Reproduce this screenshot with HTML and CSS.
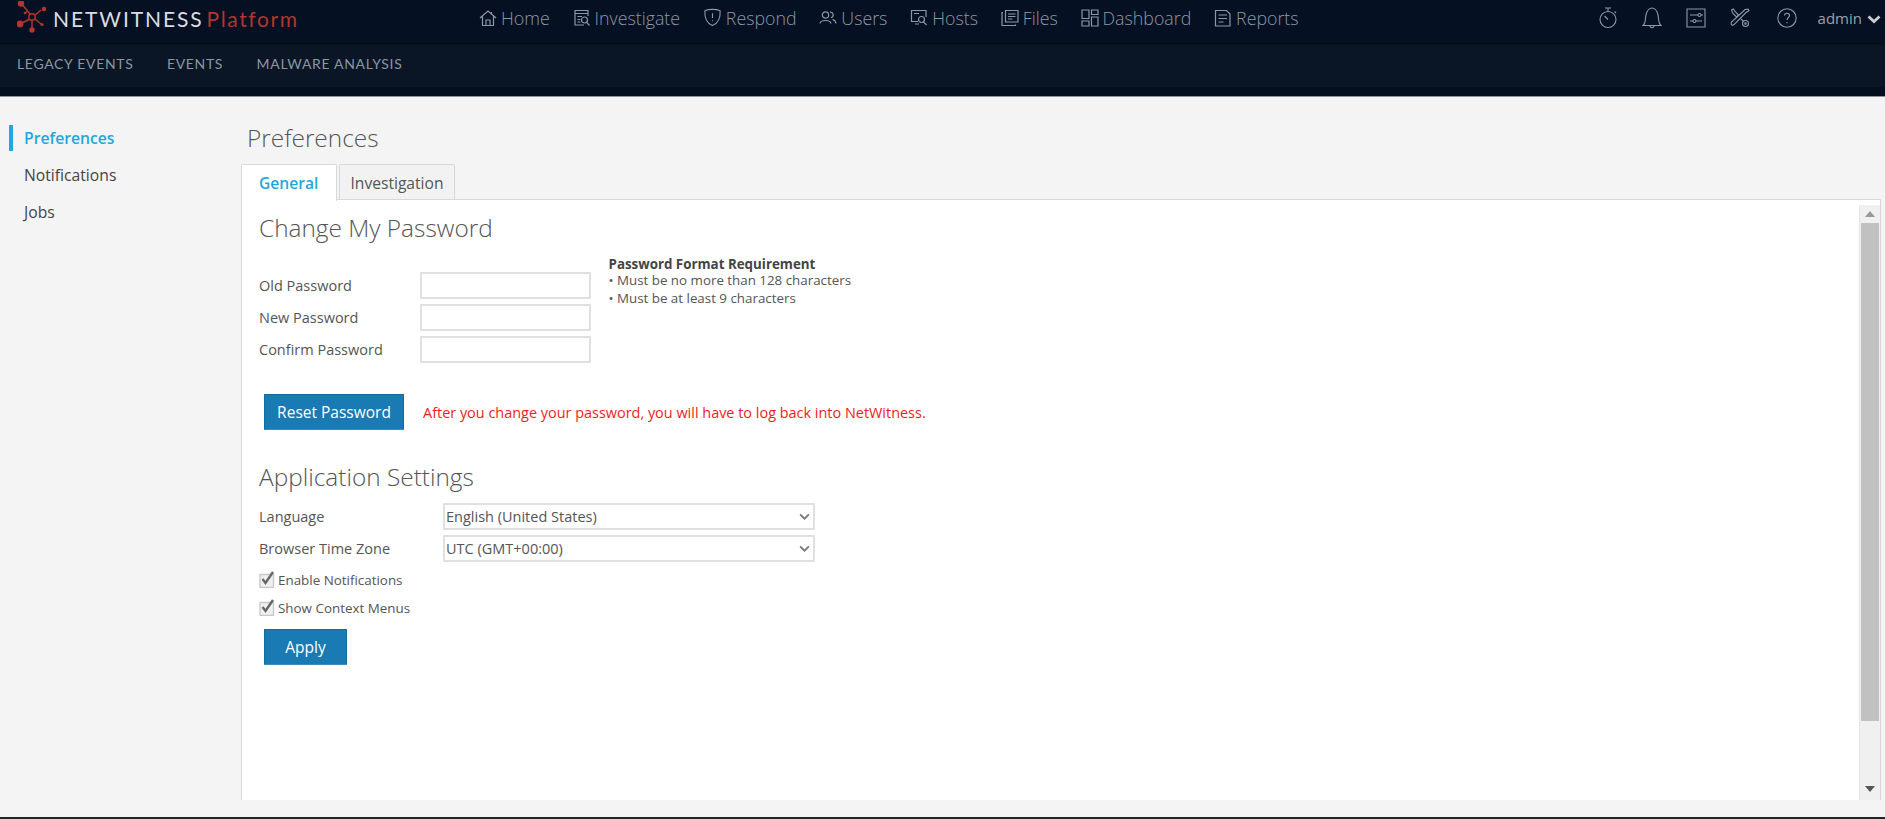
FILE: index.html
```html
<!DOCTYPE html>
<html lang="en">
<head>
<meta charset="utf-8">
<title>Preferences</title>
<link rel="stylesheet" href="styles.css">
</head>
<body>
<header class="topbar">
  <div class="logo">
    <svg class="logo-mark" viewBox="0 0 34 34" width="34" height="34">
      <g stroke="#b5342f" stroke-width="1.4" fill="none">
        <path d="M4 2 L13 13 M24 9 L18 14 M3 23 L12 18.500 M15 29 L15 19 M24 23 L18 18 M11 10 L8 12"/>
        <circle cx="15" cy="16" r="3.200"/>
      </g>
      <g fill="#b5342f">
        <circle cx="4" cy="2.500" r="3.200"/>
        <circle cx="27" cy="8" r="2.300"/>
        <circle cx="3" cy="23" r="3.400"/>
        <circle cx="15" cy="29" r="2.700"/>
        <circle cx="25" cy="23.500" r="1.600"/>
        <circle cx="8" cy="12" r="1.300"/>
      </g>
    </svg>
    <span class="logo-name">NETWITNESS</span><span class="logo-platform">Platform</span>
  </div>
  <nav class="mainnav">
    <a class="mainnav-item">
      <svg class="ico" viewBox="0 0 18 18"><path d="M1 9 L9 2 L17 9 M3.500 7.500 V16.500 H14.500 V7.500 M7 16.500 V11 H11 V16.500 M12.500 3 V5"/></svg>Home</a>
    <a class="mainnav-item">
      <svg class="ico" viewBox="0 0 18 18"><path d="M11 16 H2 V1.500 H15 V7 M2 4.500 H15 M4.500 7.500 H9 M4.500 10.500 H7.500 M4.500 13 H7.500"/><circle cx="11.500" cy="11" r="3"/><path d="M13.500 13.200 L16.500 16.500"/></svg>Investigate</a>
    <a class="mainnav-item">
      <svg class="ico ico-lg" viewBox="0 0 20 20"><path d="M10 1.500 C7 1.500 4 2 2 3 C1.500 10 3 15.500 10 18.500 C17 15.500 18.500 10 18 3 C16 2 13 1.500 10 1.500 Z M10 5.500 V10.500 M10 12.800 V14"/></svg>Respond</a>
    <a class="mainnav-item">
      <svg class="ico" viewBox="0 0 18 18"><circle cx="6.500" cy="6" r="3.200"/><path d="M1 14.500 C1.500 10.500 11.500 10.500 12 14.500 M11 3.200 C14.500 2.800 15.500 7.500 12 8.800 M13.500 10.500 C15.500 11 16.800 12.500 17 14.500"/></svg>Users</a>
    <a class="mainnav-item">
      <svg class="ico" viewBox="0 0 18 18"><path d="M8 12.500 H1.500 V1.500 H16 V8 M5 15 H9 M4 4.500 H9"/><circle cx="11.500" cy="10.500" r="3"/><path d="M13.500 12.800 L16.500 16"/></svg>Hosts</a>
    <a class="mainnav-item">
      <svg class="ico" viewBox="0 0 18 18"><path d="M4.500 1.500 H17 V13 H4.500 Z M2 3.500 H1 V16.500 H14.500 V15.500 M7 5 H14.500 M7 7.500 H14.500 M7 10 H11.500"/></svg>Files</a>
    <a class="mainnav-item">
      <svg class="ico" viewBox="0 0 18 18"><path d="M1 1 H8 V9.500 H1 Z M10.500 1 H17 V5.500 H10.500 Z M10.500 8 H17 V17 H10.500 Z M1 12 H8 V17 H1 Z"/></svg>Dashboard</a>
    <a class="mainnav-item">
      <svg class="ico" viewBox="0 0 18 18"><path d="M1.500 1.500 H12.500 L16 5 V17 H1.500 Z M4.500 6 H13 M4.500 9.500 H13 M4.500 13 H9.500"/></svg>Reports</a>
  </nav>
  <div class="tools">
    <svg class="tool tool-tall" viewBox="0 0 20 22"><circle cx="10" cy="12.500" r="8"/><path d="M7 1 H13 M10 1 V4.500 M16.500 4.500 L18 6 M6.500 9 L10 12.500"/></svg>
    <svg class="tool tool-tall" viewBox="0 0 20 22"><path d="M1 18.500 H19 C16 16 17 12 16 8 C15 3 12 1 10 1 C8 1 5 3 4 8 C3 12 4 16 1 18.500 Z M8 18.500 C8 21.500 12 21.500 12 18.500"/></svg>
    <svg class="tool" viewBox="0 0 20 20"><path d="M1 1 H19 V19 H1 Z M4 7 H12 M15 7 H17 M4 13 H7 M10 13 H16"/><circle cx="13.500" cy="7" r="1.500"/><circle cx="8.500" cy="13" r="1.500"/></svg>
    <svg class="tool tool-wrench" viewBox="0 0 20 20"><path d="M18 1 L19 2.500 L16 4.500 L5 15.500 C3 18.500 0 17 1.500 14 L13 3.500 L15 1.500 Z M1.500 2 L3.500 1 L5 3.500 L8.500 7 L6.500 9 L3 5.500 Z M11 11 L13.500 13.500"/><circle cx="15.500" cy="15.500" r="3"/><circle cx="15.500" cy="15.500" r=".8"/></svg>
    <svg class="tool tool-help" viewBox="0 0 20 20"><circle cx="10" cy="10" r="9.200"/><path d="M7.500 7.500 C7.500 4.500 12.500 4.500 12.500 7.500 C12.500 9.500 10 9.500 10 12 M10 14 V15.200"/></svg>
    <span class="user">admin</span>
    <svg class="user-caret" viewBox="0 0 14 9"><path d="M1.500 1.500 L7 6.500 L12.500 1.500"/></svg>
  </div>
</header>
<nav class="subnav">
  <a class="subnav-item">LEGACY EVENTS</a>
  <a class="subnav-item">EVENTS</a>
  <a class="subnav-item">MALWARE ANALYSIS</a>
</nav>
<div class="subnav-foot"></div>

<div class="page">
  <aside class="sidebar">
    <a class="side-item side-item-active">Preferences</a>
    <a class="side-item">Notifications</a>
    <a class="side-item">Jobs</a>
  </aside>
  <main class="content">
    <h1 class="page-title">Preferences</h1>
    <div class="tabs">
      <a class="tab tab-active">General</a>
      <a class="tab">Investigation</a>
    </div>
    <section class="panel">
      <div class="panel-body">
        <h2 class="section-title">Change My Password</h2>
        <div class="pw-block">
          <div class="pw-fields">
            <label class="pw-row"><span class="pw-label">Old Password</span><input class="text-input" type="password"></label>
            <label class="pw-row"><span class="pw-label">New Password</span><input class="text-input" type="password"></label>
            <label class="pw-row"><span class="pw-label">Confirm Password</span><input class="text-input" type="password"></label>
          </div>
          <div class="pw-rules">
            <div class="pw-rules-title">Password Format Requirement</div>
            <div class="pw-rule">• Must be no more than 128 characters</div>
            <div class="pw-rule">• Must be at least 9 characters</div>
          </div>
        </div>
        <div class="reset-row">
          <button class="btn btn-reset" type="button">Reset Password</button>
          <span class="warn">After you change your password, you will have to log back into NetWitness.</span>
        </div>
        <h2 class="section-title section-title-app">Application Settings</h2>
        <label class="set-row"><span class="set-label">Language</span>
          <span class="select-wrap"><select class="select"><option>English (United States)</option></select>
          <svg class="select-arrow" viewBox="0 0 10 6"><path d="M1 1 L5 5 L9 1"/></svg></span></label>
        <label class="set-row"><span class="set-label">Browser Time Zone</span>
          <span class="select-wrap"><select class="select"><option>UTC (GMT+00:00)</option></select>
          <svg class="select-arrow" viewBox="0 0 10 6"><path d="M1 1 L5 5 L9 1"/></svg></span></label>
        <label class="check-row">
          <svg class="check" viewBox="0 0 16 17"><path class="check-box" d="M1 3.500 H14.500 V16.500 H1 Z"/><path class="check-mark" d="M3.500 8 L6.500 12 L14 1"/></svg>
          Enable Notifications</label>
        <label class="check-row">
          <svg class="check" viewBox="0 0 16 17"><path class="check-box" d="M1 3.500 H14.500 V16.500 H1 Z"/><path class="check-mark" d="M3.500 8 L6.500 12 L14 1"/></svg>
          Show Context Menus</label>
        <button class="btn btn-apply" type="button">Apply</button>
      </div>
      <div class="scrollbar">
        <div class="scroll-arrow scroll-arrow-up"><svg viewBox="0 0 10 6" width="10" height="6"><path d="M5 0 L10 6 H0 Z"/></svg></div>
        <div class="scroll-thumb"></div>
        <div class="scroll-rest"></div>
        <div class="scroll-arrow scroll-arrow-down"><svg viewBox="0 0 10 6" width="10" height="6"><path d="M0 0 H10 L5 6 Z"/></svg></div>
      </div>
    </section>
  </main>
</div>
<div class="bottom-line"></div>
</body>
</html>
```
FILE: styles.css
```css
* { box-sizing: border-box; }
html, body { margin: 0; height: 100%; }
body {
  width: 1885px;
  height: 819px;
  overflow: hidden;
  display: flex;
  flex-direction: column;
  background: #f4f4f4;
  font-family: "Open Sans", sans-serif;
  color: #444;
  font-size: 14px;
}

.topbar {
  height: 43px;
  flex: none;
  background: #051022;
  display: flex;
  align-items: center;
  padding-bottom: 8px;
}
.logo { display: flex; align-items: center; margin: 2px 0 0 17px; width: 462px; height: 36px; }
.logo-mark { flex: none; margin-top: -2px; }
.logo-name {
  font-family: Lato, sans-serif;
  font-size: 21px;
  letter-spacing: 1.900px;
  color: #d9dde2;
  margin-left: 2px;
}
.logo-platform {
  font-family: Lato, sans-serif;
  font-size: 21px;
  letter-spacing: 1.600px;
  color: #b5342f;
  margin-left: 3px;
}
.mainnav { display: flex; align-items: center; height: 35px; gap: 22.800px; }
.mainnav-item {
  display: flex;
  align-items: center;
  gap: 4px;
  font-size: 17.800px;
  font-weight: 300;
  color: #8d97a8;
  white-space: nowrap;
}
.ico { width: 18px; height: 18px; flex: none; fill: none; stroke: #8d97a8; stroke-width: 1.2; }
.ico-lg { width: 19px; height: 19px; }
.tools { display: flex; align-items: center; margin-left: auto; height: 35px; padding-right: 4px; }
.tool { flex: none; fill: none; stroke: #8f98a5; stroke-width: 1.1; width: 20px; height: 20px; margin-right: 24px; }
.tool-tall { height: 22px; }
.tool-wrench { margin-right: 27px; }
.tool-help { margin-right: 21px; }
.user { font-size: 15px; color: #9aa1ac; }
.user-caret { flex: none; width: 14px; height: 9px; margin: 3px 0 0 5px; fill: none; stroke: #c9cdd2; stroke-width: 2.8; }

.subnav {
  height: 44px;
  flex: none;
  background: #0a1626;
  display: flex;
  align-items: center;
  padding: 0 0 4px 17px;
  gap: 33.500px;
  box-shadow: inset 0 2px 2px -1px #020811;
}
.subnav-item {
  font-family: Lato, sans-serif;
  font-size: 14px;
  letter-spacing: .67px;
  color: #8b95a3;
}
.subnav-foot { height: 10px; flex: none; background: #040e1d; border-bottom: 1px solid #8f95a0; }

.page { flex: 1; display: flex; min-height: 0; }
.sidebar { width: 241px; flex: none; padding: 28px 0 0 9px; display: flex; flex-direction: column; gap: 11px; }
.side-item {
  display: block;
  height: 26px;
  line-height: 26px;
  padding-left: 15px;
  font-size: 15.700px;
  color: #444;
}
.side-item-active { border-left: 4px solid #1fa8e0; padding-left: 11px; color: #1fa8e0; font-weight: 600; }

.content { flex: 1; min-width: 0; display: flex; flex-direction: column; padding-right: 4px; }
.page-title {
  margin: 0;
  height: 67px;
  padding: 24px 0 0 6px;
  font-size: 24.400px;
  line-height: 34px;
  font-weight: 300;
  color: #555;
}
.tabs { display: flex; gap: 2px; height: 35px; flex: none; position: relative; z-index: 1; }
.tab {
  height: 35px;
  padding: 0 10.500px;
  line-height: 36px;
  font-size: 15.600px;
  color: #555;
  background: #f2f2f2;
  border: 1px solid #d8d8d8;
  border-bottom: none;
  border-radius: 2px 2px 0 0;
}
.tab-active {
  width: 96px;
  height: 37px;
  padding: 0 17px;
  background: #fff;
  color: #1fa8e0;
  font-weight: 600;
}
.panel {
  height: 601px;
  flex: none;
  background: #fff;
  border: 1px solid #d8d8d8;
  border-bottom: none;
  display: flex;
}
.panel-body { flex: 1; min-width: 0; padding: 11px 0 0 17px; }
.section-title { margin: 0; font-size: 24.400px; line-height: 34px; font-weight: 300; color: #555; }
.pw-block { display: flex; margin-top: 11px; height: 138px; }
.pw-fields { width: 349.500px; padding-top: 16px; display: flex; flex-direction: column; gap: 5px; }
.pw-row { display: flex; align-items: center; height: 27px; }
.pw-label { width: 161px; flex: none; font-size: 14.500px; color: #555; }
.text-input { width: 171px; height: 27px; border: 2px solid #e0e0e0; background: #fff; padding: 0; border-radius: 1px; }
.pw-rules { font-size: 13.350px; line-height: 17.500px; color: #555; }
.pw-rules-title { font-weight: 700; color: #444; line-height: 16px; }
.reset-row { display: flex; align-items: center; padding-left: 5px; gap: 19px; }
.btn {
  display: block;
  height: 36px;
  border: 1px solid #156a9e;
  border-bottom-color: #3c8cbd;
  border-radius: 1px;
  background: #197ab4;
  color: #fff;
  font-family: "Open Sans", sans-serif;
  font-size: 15.500px;
  padding: 0;
}
.btn-reset { width: 140px; }
.warn { font-size: 14.450px; color: #f01c22; }
.section-title-app { margin-top: 30px; }
.set-row { display: flex; align-items: center; height: 27px; margin-top: 5px; }
.section-title-app + .set-row { margin-top: 9px; }
.set-label { width: 184px; flex: none; font-size: 14.500px; color: #555; }
.select-wrap { display: block; position: relative; width: 372px; height: 27px; }
.select {
  display: block;
  width: 100%;
  height: 27px;
  border: 2px solid #e0e0e0;
  border-radius: 1px;
  background: #fff;
  font-family: "Open Sans", sans-serif;
  font-size: 14.500px;
  color: #555;
  padding: 0 0 0 1px;
  appearance: none;
}
.select-arrow {
  position: absolute;
  right: 5px;
  top: 10px;
  width: 11px;
  height: 7px;
  fill: none;
  stroke: #777;
  stroke-width: 1.600;
  pointer-events: none;
}
.check-row { display: flex; align-items: center; height: 17px; font-size: 13.400px; color: #555; gap: 4px; }
.check-row + .check-row { margin-top: 11px; }
.set-row + .check-row { margin-top: 9px; }
.check { width: 16px; height: 17px; flex: none; margin-right: -1px; }
.check-box { fill: #f0f0f0; stroke: #c8c8c8; stroke-width: 1.400; }
.check-mark { fill: none; stroke: #666; stroke-width: 2.400; }
.btn-apply { width: 83px; margin: 13px 0 0 5px; }

.scrollbar {
  width: 21px;
  flex: none;
  margin-top: 5px;
  background: #f0f0f0;
  display: flex;
  flex-direction: column;
  border-left: 1px solid #e4e4e4;
}
.scroll-arrow { height: 18px; flex: none; display: flex; align-items: center; justify-content: center; }
.scroll-arrow svg { fill: #999; }
.scroll-arrow-down { height: 23px; }
.scroll-arrow-down svg { fill: #555; }
.scroll-thumb { height: 498px; flex: none; background: #c1c1c1; margin: 0 1px; }
.scroll-rest { flex: 1; }
.bottom-line { height: 2px; flex: none; background: #222; }
```
